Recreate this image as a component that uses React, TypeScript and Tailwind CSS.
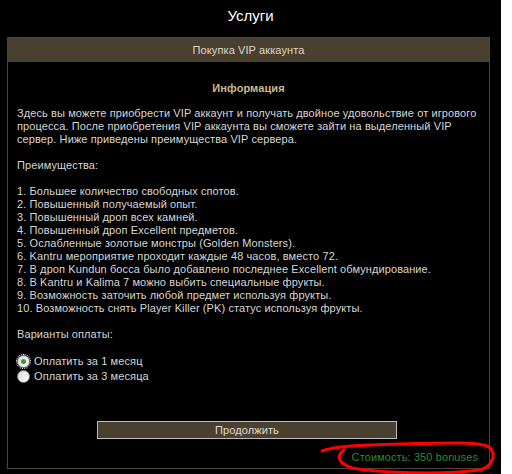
const perks = [
  "1. Большее количество свободных спотов.",
  "2. Повышенный получаемый опыт.",
  "3. Повышенный дроп всех камней.",
  "4. Повышенный дроп Excellent предметов.",
  "5. Ослабленные золотые монстры (Golden Monsters).",
  "6. Kantru мероприятие проходит каждые 48 часов, вместо 72.",
  "7. В дроп Kundun босса было добавлено последнее Excellent обмундирование.",
  "8. В Kantru и Kalima 7 можно выбить специальные фрукты.",
  "9. Возможность заточить любой предмет используя фрукты.",
  "10. Возможность снять Player Killer (PK) статус используя фрукты.",
];

function Radio({ checked, label }: { checked?: boolean; label: string }) {
  return (
    <label className="flex items-center h-[15px] gap-[4px]">
      <span
        className={`flex items-center justify-center w-[13px] h-[13px] rounded-full bg-gradient-to-br from-[#d8d8d8] to-white border border-[#8a8a8a] ${
          checked ? "outline-1 outline-dotted outline-white" : ""
        }`}
      >
        {checked && <span className="w-[5px] h-[5px] rounded-full bg-[#2fa02f]" />}
      </span>
      <span>{label}</span>
    </label>
  );
}

export default function App() {
  return (
    <div className="flex w-[512px] h-[474px] bg-white">
      <div
        className="relative w-[501px] h-[474px] bg-black text-[11px] leading-[13px] tracking-[0.1px] text-[#d6d6d6]"
        style={{ fontFamily: '"Liberation Sans", Arial, sans-serif' }}
      >
        {/* Page title */}
        <div className="h-[37px] pt-[6px] text-center text-[15px] leading-[20px] tracking-normal text-white">
          Услуги
        </div>

        <div className="ml-[7px] w-[483px] h-[432px] border border-[#4d4638] flex flex-col">
          <div className="h-[24px] bg-[#4a4030] flex items-center justify-center text-[#ddd6c6]">
            Покупка VIP аккаунта
          </div>

          <div className="px-[9px] flex flex-col">
            <div className="mt-[20px] text-center font-bold text-[#cbb98e]">Информация</div>

            <p className="mt-[12px] whitespace-nowrap">
              Здесь вы можете приобрести VIP аккаунт и получать двойное удовольствие от игрового
              <br />
              процесса. После приобретения VIP аккаунта вы сможете зайти на выделенный VIP
              <br />
              сервер. Ниже приведены преимущества VIP сервера.
            </p>

            <p className="mt-[13px]">Преимущества:</p>

            <div className="mt-[13px] whitespace-nowrap">
              {perks.map((p) => (
                <div key={p}>{p}</div>
              ))}
            </div>

            <p className="mt-[13px]">Варианты оплаты:</p>

            <div className="mt-[13px] flex flex-col">
              <Radio checked label="Оплатить за 1 месяц" />
              <Radio label="Оплатить за 3 месяца" />
            </div>

            <div className="mt-[37px] flex justify-center pr-[3px]">
              <button className="w-[300px] h-[18px] bg-[#4a4030] border border-[#bdbdbd] text-[#e0dccf] text-[11px] leading-[16px]">
                Продолжить
              </button>
            </div>

            <div className="mt-[12px] text-right pr-[2px] text-[#2f8a2f]">
              Стоимость: 350 bonuses
            </div>
          </div>
        </div>

        {/* red hand-drawn annotation */}
        <svg className="absolute left-0 top-0 pointer-events-none" width="512" height="474">
          <path
            d="M322,451 C335,446 360,445 400,444 C440,443 478,441 489,447 C497,454 493,466 480,470 C440,475 380,473 352,468 C338,463 336,456 344,450"
            fill="none"
            stroke="#ff0000"
            strokeWidth="3"
            strokeLinecap="round"
          />
        </svg>
      </div>
    </div>
  );
}
